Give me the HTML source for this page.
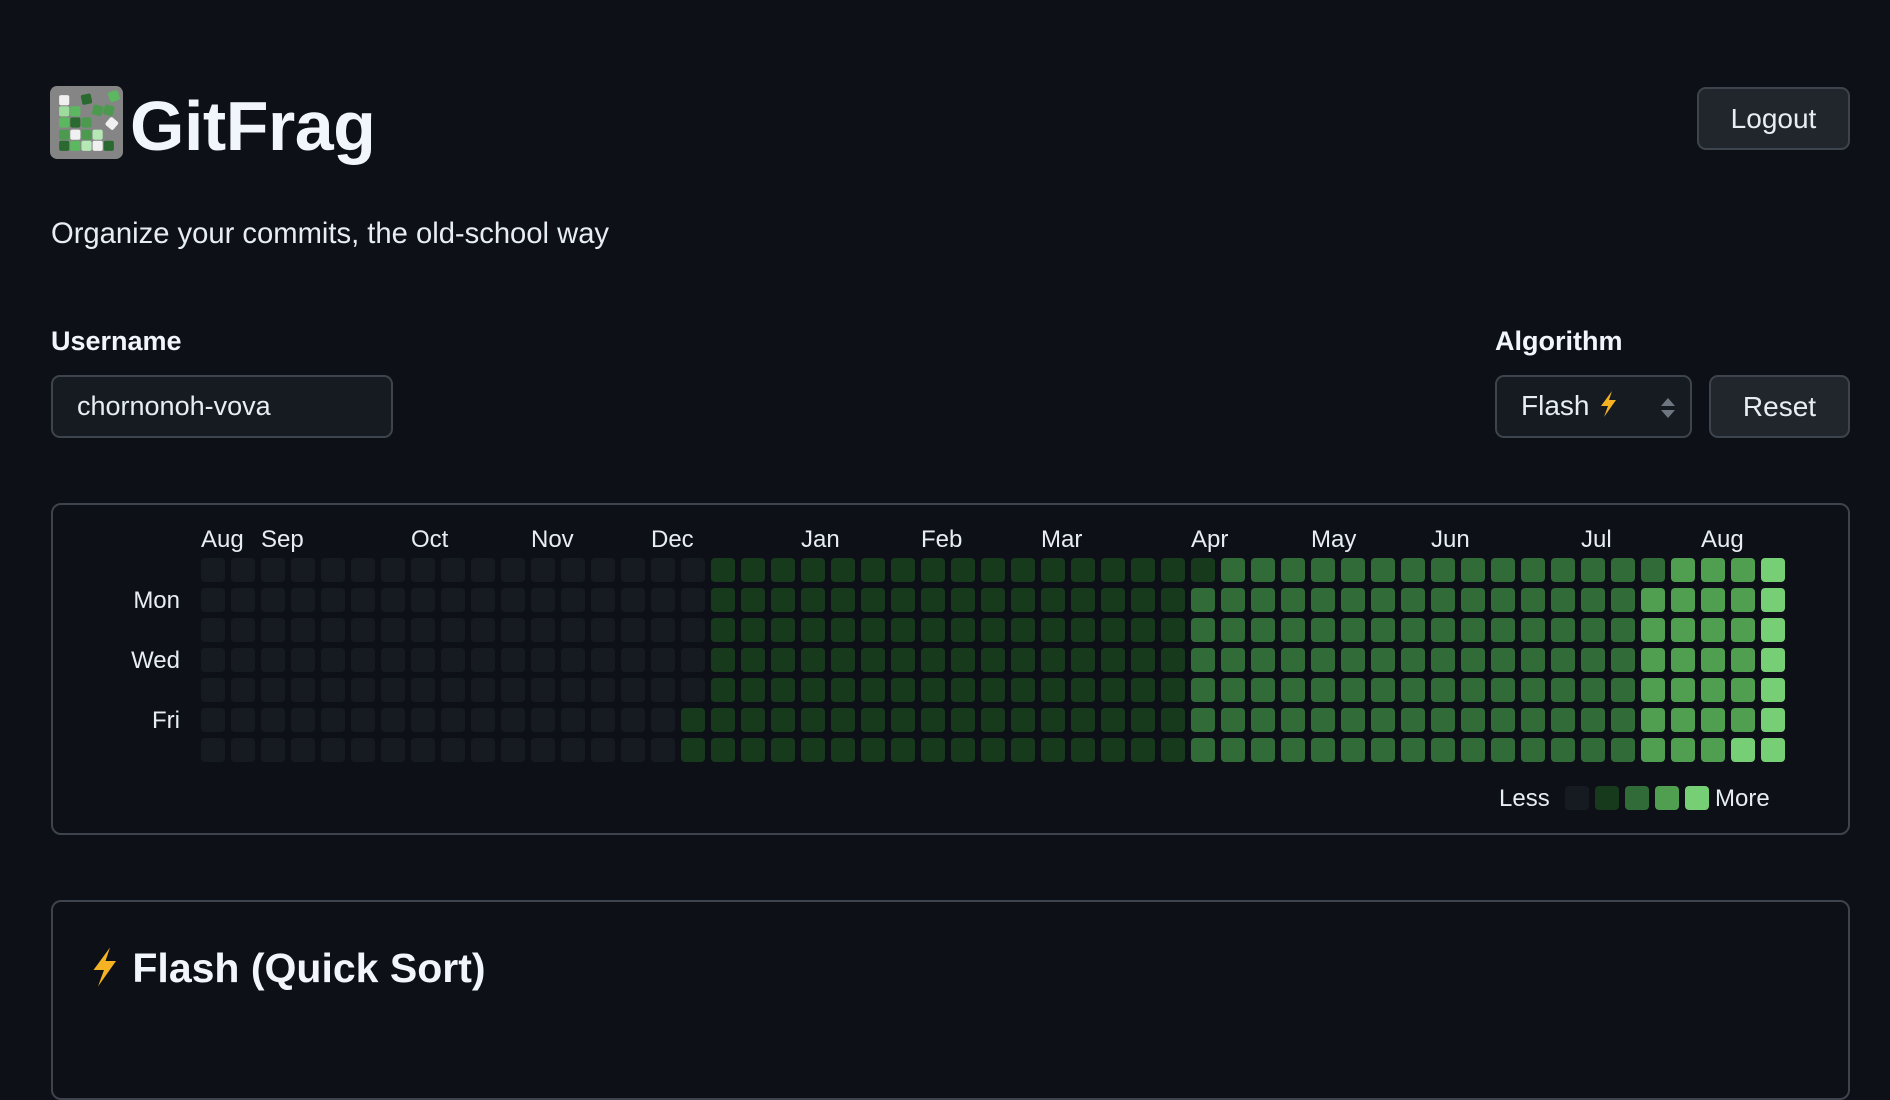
<!DOCTYPE html>
<html><head><meta charset="utf-8"><style>
*{margin:0;padding:0;box-sizing:border-box}
html,body{width:1890px;height:1034px;overflow:hidden;background:#0d1117;color:#e6edf3;font-family:"Liberation Sans",sans-serif}
.abs{position:absolute}
.title{left:130px;top:86px;font-size:70px;font-weight:bold;color:#f0f6fc;letter-spacing:-0.5px}
.btn{background:#21262d;border:2px solid #3d444d;border-radius:9px;color:#e6edf3;font-size:28px;display:flex;align-items:center;justify-content:center}
.lbl{font-size:27px;font-weight:bold;color:#f0f6fc}
.card{border:2px solid #3d444d;border-radius:10px}
.cell{position:absolute;width:24px;height:24px;border-radius:4px}
.m{position:absolute;top:526px;font-size:24px;color:#e6edf3}
.d{position:absolute;right:1710px;font-size:24px;color:#e6edf3}
</style></head><body>
<svg class="abs" style="left:50px;top:86px" width="73" height="73" viewBox="0 0 72 72">
<rect width="72" height="72" rx="7" fill="#858585"/>
<g>
<rect x="9" y="9" width="10" height="10" rx="2" fill="#f0f0f0"/>
<rect x="31" y="8" width="10" height="10" rx="2" fill="#2a6a30" transform="rotate(-12 36 13)"/>
<rect x="58" y="5" width="10" height="10" rx="2" fill="#5cb860" transform="rotate(-20 63 10)"/>
<rect x="9" y="20" width="10" height="10" rx="2" fill="#9edc9e"/>
<rect x="20" y="20" width="10" height="10" rx="2" fill="#5cb860"/>
<rect x="42" y="19" width="10" height="10" rx="2" fill="#4c9a50" transform="rotate(15 47 24)"/>
<rect x="53" y="19" width="10" height="10" rx="2" fill="#4c9a50" transform="rotate(15 58 24)"/>
<rect x="9" y="31" width="10" height="10" rx="2" fill="#5cb860"/>
<rect x="20" y="31" width="10" height="10" rx="2" fill="#2a6a30"/>
<rect x="31" y="31" width="10" height="10" rx="2" fill="#4c9a50"/>
<rect x="56" y="32" width="10" height="10" rx="2" fill="#f0f0f0" transform="rotate(40 61 37)"/>
<rect x="9" y="43" width="10" height="10" rx="2" fill="#4c9a50"/>
<rect x="20" y="43" width="10" height="10" rx="2" fill="#f0f0f0"/>
<rect x="31" y="43" width="10" height="10" rx="2" fill="#4c9a50"/>
<rect x="42" y="43" width="10" height="10" rx="2" fill="#b5e8b5"/>
<rect x="9" y="54" width="10" height="10" rx="2" fill="#2a6a30"/>
<rect x="20" y="54" width="10" height="10" rx="2" fill="#5cb860"/>
<rect x="31" y="54" width="10" height="10" rx="2" fill="#b5e8b5"/>
<rect x="42" y="54" width="10" height="10" rx="2" fill="#f0f0f0"/>
<rect x="53" y="54" width="10" height="10" rx="2" fill="#2a6a30"/>
</g></svg>
<div class="abs title">GitFrag</div>
<div class="abs btn" style="left:1697px;top:87px;width:153px;height:63px">Logout</div>
<div class="abs" style="left:51px;top:218px;font-size:29.2px">Organize your commits, the old-school way</div>
<div class="abs lbl" style="left:51px;top:326px">Username</div>
<div class="abs" style="left:51px;top:375px;width:342px;height:63px;background:#161b22;border:2px solid #3d444d;border-radius:9px;font-size:27px;padding:14px 0 0 24px">chornonoh-vova</div>
<div class="abs lbl" style="left:1495px;top:326px">Algorithm</div>
<div class="abs" style="left:1495px;top:375px;width:197px;height:63px;background:#161b22;border:2px solid #3d444d;border-radius:9px;font-size:28px;padding:13px 0 0 24px">Flash <svg width="22" height="28" viewBox="0 0 22 28" style="vertical-align:-3px"><path d="M15 1 L4 16 L11 16 L7 27 L19 10 L12 10 Z" fill="#f5b324"/></svg>
<svg class="abs" style="left:163px;top:20px" width="16" height="22" viewBox="0 0 16 22"><path d="M8 1 L15 9 L1 9Z M1 13 L15 13 L8 21Z" fill="#6e7681"/></svg></div>
<div class="abs btn" style="left:1709px;top:375px;width:141px;height:63px">Reset</div>
<div class="abs card" style="left:51px;top:503px;width:1799px;height:332px"></div>
<div class="m" style="left:201px">Aug</div><div class="m" style="left:261px">Sep</div><div class="m" style="left:411px">Oct</div><div class="m" style="left:531px">Nov</div><div class="m" style="left:651px">Dec</div><div class="m" style="left:801px">Jan</div><div class="m" style="left:921px">Feb</div><div class="m" style="left:1041px">Mar</div><div class="m" style="left:1191px">Apr</div><div class="m" style="left:1311px">May</div><div class="m" style="left:1431px">Jun</div><div class="m" style="left:1581px">Jul</div><div class="m" style="left:1701px">Aug</div>
<div class="d" style="top:587px">Mon</div><div class="d" style="top:647px">Wed</div><div class="d" style="top:707px">Fri</div>
<div id="g"></div>
<div class="abs" style="left:1499px;top:785px;font-size:24px">Less</div>
<div class="cell" style="left:1565px;top:786px;background:#161b22"></div>
<div class="cell" style="left:1595px;top:786px;background:#183a1c"></div>
<div class="cell" style="left:1625px;top:786px;background:#316b37"></div>
<div class="cell" style="left:1655px;top:786px;background:#509e50"></div>
<div class="cell" style="left:1685px;top:786px;background:#76cf74"></div>
<div class="abs" style="left:1715px;top:785px;font-size:24px">More</div>
<div class="abs card" style="left:51px;top:900px;width:1799px;height:200px"></div>
<div class="abs" style="left:87px;top:945px;font-size:41px;font-weight:bold;color:#f0f6fc"><svg width="34" height="42" viewBox="0 0 22 28" style="vertical-align:-6px"><path d="M15 1 L4 16 L11 16 L7 27 L19 10 L12 10 Z" fill="#f5b324"/></svg> Flash (Quick Sort)</div>
<script>
var C=['#161b22','#183a1c','#316b37','#509e50','#76cf74'],h='';
for(var c=0;c<53;c++)for(var r=0;r<7;r++){var l=0;
if(c==16&&r>=5)l=1;else if(c>=17&&c<=32)l=1;else if(c==33)l=r==0?1:2;else if(c>=34&&c<=47)l=2;else if(c==48)l=r==0?2:3;else if(c>=49&&c<=51)l=(c==51&&r==6)?4:3;else if(c==52)l=4;
h+='<div class="cell" style="left:'+(201+c*30)+'px;top:'+(558+r*30)+'px;background:'+C[l]+'"></div>';}
document.getElementById('g').innerHTML=h;
</script>
</body></html>
